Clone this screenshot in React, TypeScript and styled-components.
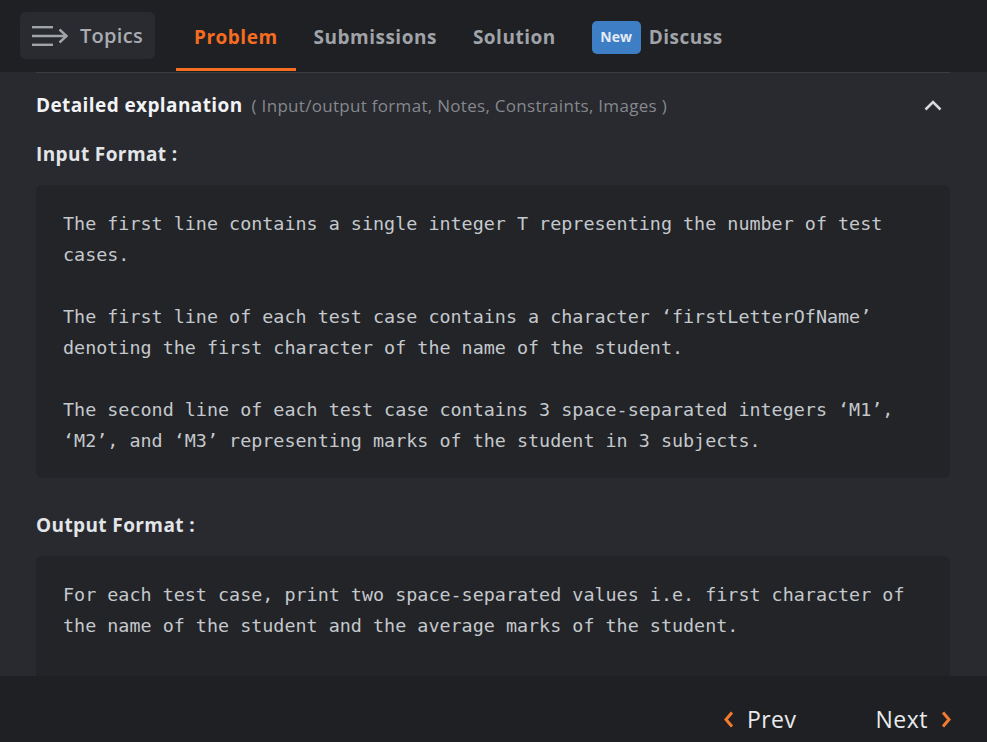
import React from "react";
import styled, { createGlobalStyle } from "styled-components";

const Global = createGlobalStyle`
  html, body { margin: 0; padding: 0; background: #1e2023; }
  body { font-family: "Open Sans", Lato, sans-serif; }
  * { box-sizing: border-box; }
`;

const Page = styled.div`
  height: 100vh;
  display: flex;
  flex-direction: column;
  background: #282a2f;
  overflow: hidden;
`;

const Header = styled.header`
  height: 72px;
  flex: none;
  background: #1e2023;
  display: flex;
  align-items: stretch;
  padding: 12px 0 0 20px;
  gap: 21px;
`;

const TopicsButton = styled.div`
  height: 47px;
  display: flex;
  align-items: center;
  gap: 12px;
  padding: 0 12px;
  background: #292b30;
  border-radius: 6px;
  color: #a9adb3;
  font-size: 20px;
  font-weight: 600;
  letter-spacing: 0.3px;
  line-height: 24px;
`;

const Tabs = styled.nav`
  display: flex;
  align-items: stretch;
`;

const Tab = styled.div<{ $active?: boolean }>`
  display: flex;
  align-items: center;
  gap: 8px;
  padding: 0 18px 6px;
  font-size: 19px;
  font-weight: 700;
  letter-spacing: 0.5px;
  line-height: 24px;
  color: ${(p) => (p.$active ? "#f66c21" : "#a0a3a8")};
  border-bottom: 3px solid ${(p) => (p.$active ? "#f66c21" : "transparent")};
  margin-bottom: 1px;
`;

const Badge = styled.span`
  display: inline-flex;
  align-items: center;
  justify-content: center;
  width: 49px;
  height: 33px;
  border-radius: 5px;
  background: #3e7ec4;
  color: #e4ebf5;
  font-size: 14px;
  font-weight: 700;
  letter-spacing: 0;
`;

const Content = styled.main`
  flex: 1;
  overflow: hidden;
  padding: 0 37px 0 36px;
`;

const Divider = styled.div`
  height: 1px;
  background: #393c41;
`;

const ExplRow = styled.div`
  display: flex;
  align-items: center;
  justify-content: space-between;
  margin-top: 20px;
  height: 24px;
  padding-right: 8px;
`;

const ExplTitle = styled.div`
  display: flex;
  align-items: baseline;
  gap: 9px;
`;

const Strong = styled.span`
  color: #f2f3f5;
  font-size: 19px;
  font-weight: 700;
  letter-spacing: 0.4px;
  line-height: 24px;
`;

const Muted = styled.span`
  color: #85888d;
  font-size: 17px;
  letter-spacing: 0.3px;
  line-height: 24px;
`;

const SectionTitle = styled.h3<{ $top: number }>`
  margin: ${(p) => p.$top}px 0 19px;
  line-height: 24px;
  font-size: 19px;
  font-weight: 700;
  letter-spacing: 0.4px;
  color: #e3e5e8;
`;

const CodeBox = styled.pre<{ $minHeight?: number }>`
  margin: 0;
  padding: 22.5px 27px;
  min-height: ${(p) => (p.$minHeight ? `${p.$minHeight}px` : "0")};
  background: #222428;
  border-radius: 6px;
  font-family: "DejaVu Sans Mono", "Liberation Mono", monospace;
  font-size: 18.4px;
  line-height: 31px;
  color: #c5c8cc;
  white-space: pre-wrap;
`;

const Footer = styled.footer`
  height: 66px;
  flex: none;
  background: #1e2023;
  display: flex;
  align-items: flex-start;
  justify-content: flex-end;
  gap: 79px;
  padding: 30px 36px 0 0;
`;

const NavButton = styled.div`
  display: flex;
  align-items: center;
  height: 26px;
  gap: 13px;
  color: #e8eaed;
  font-size: 23px;
  font-weight: 400;
  letter-spacing: 0.5px;
  line-height: 26px;
`;

const MenuIcon = () => (
  <svg width="36" height="20" viewBox="0 0 36 20" fill="none" stroke="#a0a3a8" strokeWidth="2.4" strokeLinecap="butt">
    <line x1="0" y1="1.2" x2="21" y2="1.2" />
    <line x1="0" y1="10" x2="35" y2="10" />
    <line x1="0" y1="18.8" x2="21" y2="18.8" />
    <polyline points="27.5,3.5 34.5,10 27.5,16.5" strokeLinejoin="miter" />
  </svg>
);

const ChevronUp = () => (
  <svg width="18" height="11" viewBox="0 0 18 11" fill="none" stroke="#d6d8db" strokeWidth="2.6">
    <polyline points="1.5,9.5 9,2 16.5,9.5" />
  </svg>
);

const Chevron = ({ dir }: { dir: "left" | "right" }) => (
  <svg width="10" height="17" viewBox="0 0 10 17" fill="none" stroke="#f47b2e" strokeWidth="3">
    {dir === "left" ? <polyline points="8,1.5 2,8.5 8,15.5" /> : <polyline points="2,1.5 8,8.5 2,15.5" />}
  </svg>
);

const input = `The first line contains a single integer T representing the number of test cases.

The first line of each test case contains a character ‘firstLetterOfName’ denoting the first character of the name of the student.

The second line of each test case contains 3 space-separated integers ‘M1’, ‘M2’, and ‘M3’ representing marks of the student in 3 subjects.`;

const output = `For each test case, print two space-separated values i.e. first character of the name of the student and the average marks of the student.`;

export default function App() {
  return (
    <>
      <Global />
      <Page>
        <Header>
          <TopicsButton>
            <MenuIcon />
            Topics
          </TopicsButton>
          <Tabs>
            <Tab $active>Problem</Tab>
            <Tab>Submissions</Tab>
            <Tab>Solution</Tab>
            <Tab>
              <Badge>New</Badge>
              Discuss
            </Tab>
          </Tabs>
        </Header>
        <Content>
          <Divider />
          <ExplRow>
            <ExplTitle>
              <Strong>Detailed explanation</Strong>
              <Muted>( Input/output format, Notes, Constraints, Images )</Muted>
            </ExplTitle>
            <ChevronUp />
          </ExplRow>
          <SectionTitle $top={25}>Input Format :</SectionTitle>
          <CodeBox>{input}</CodeBox>
          <SectionTitle $top={35}>Output Format :</SectionTitle>
          <CodeBox $minHeight={200}>{output}</CodeBox>
        </Content>
        <Footer>
          <NavButton>
            <Chevron dir="left" />
            Prev
          </NavButton>
          <NavButton>
            Next
            <Chevron dir="right" />
          </NavButton>
        </Footer>
      </Page>
    </>
  );
}
